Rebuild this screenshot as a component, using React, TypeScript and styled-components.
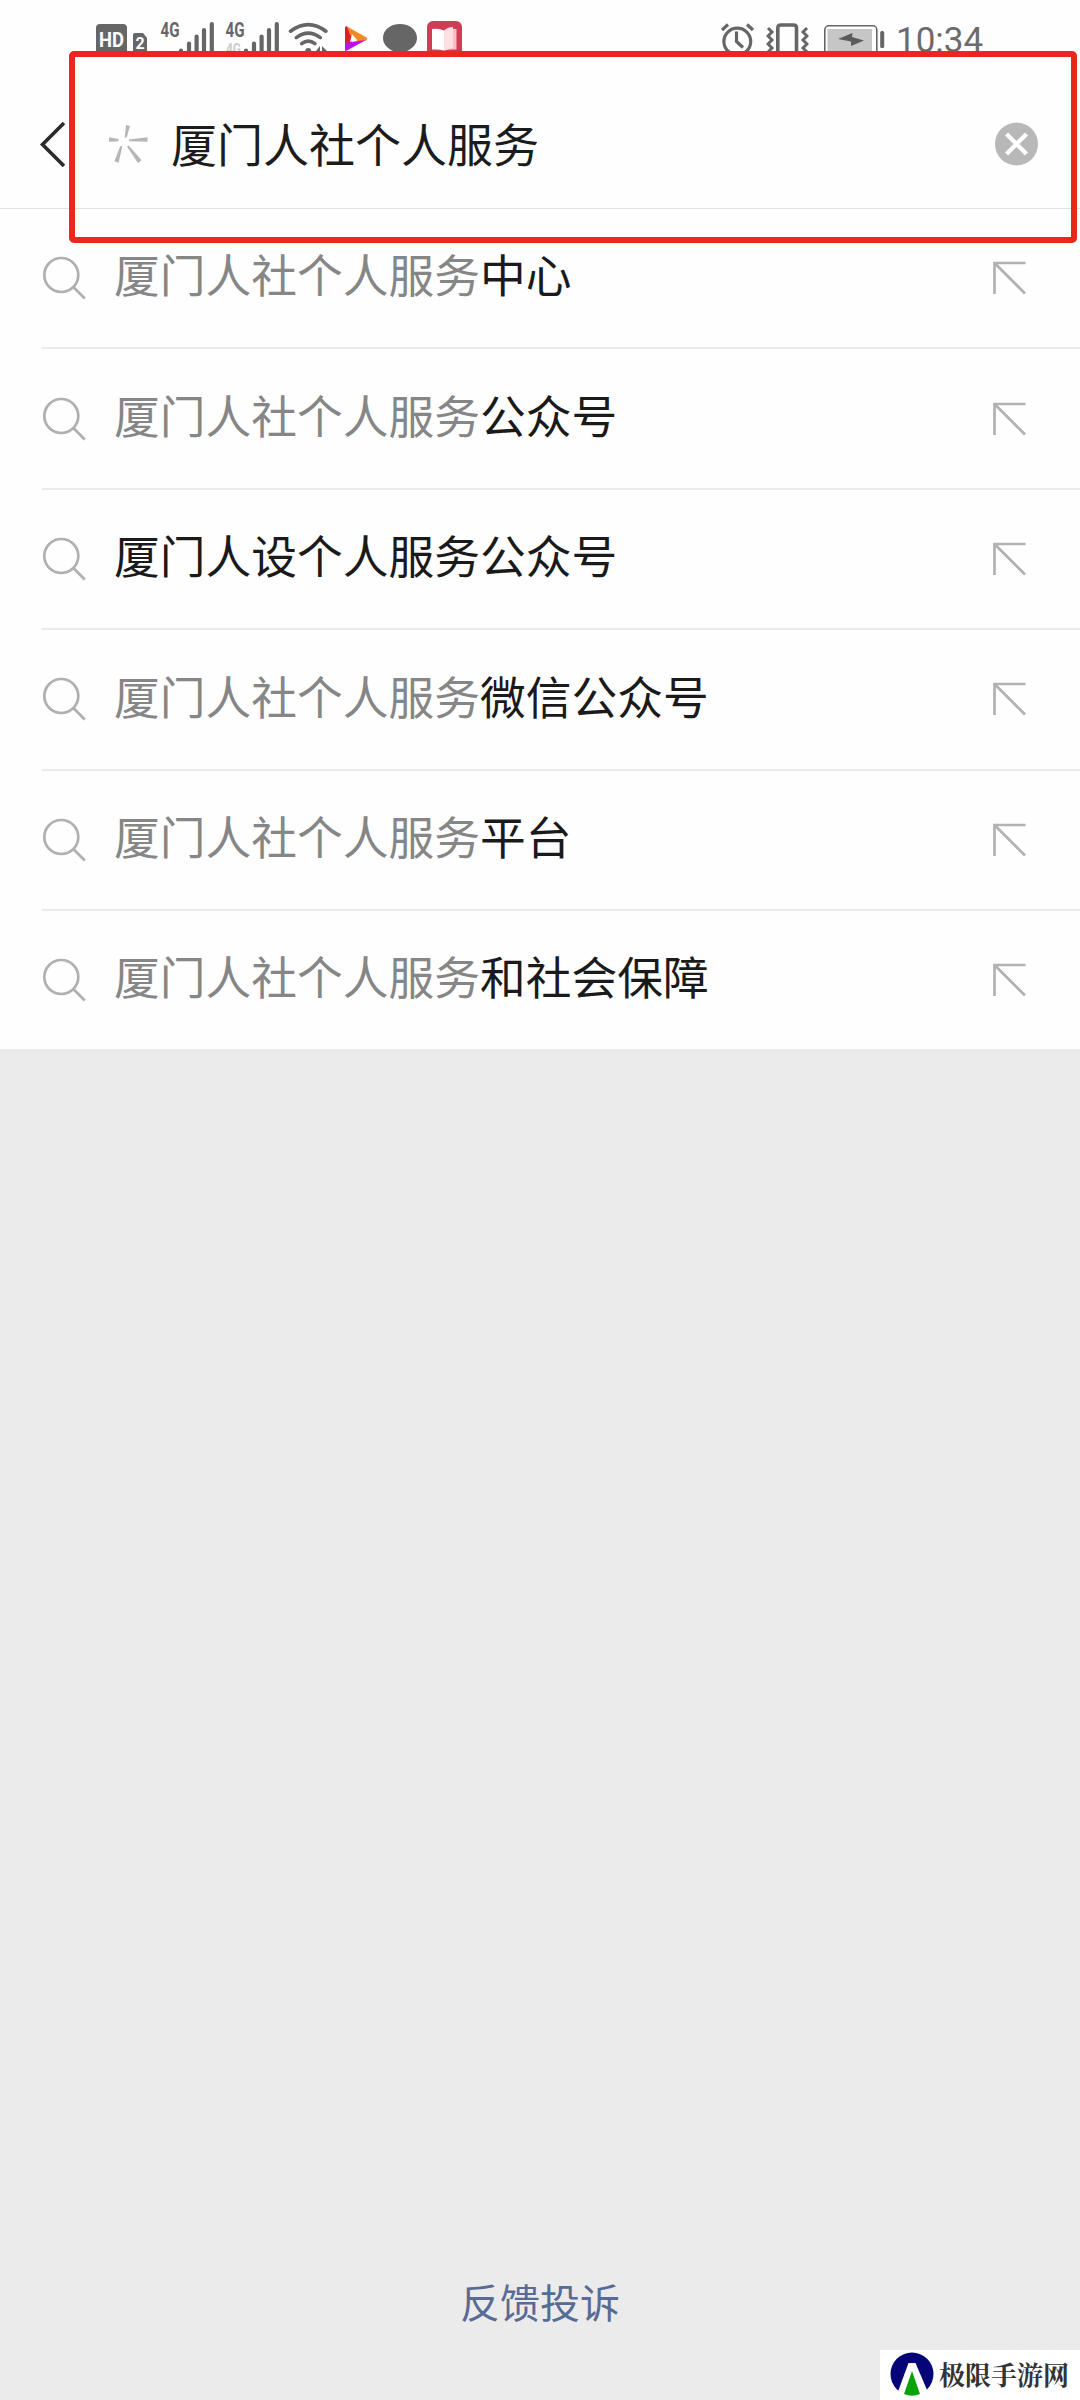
import React from "react";
import styled, { createGlobalStyle } from "styled-components";

const GlobalStyle = createGlobalStyle`
  * { box-sizing: border-box; }
  body {
    margin: 0;
    background: #ebebeb;
    font-family: "Noto Sans CJK SC", "Noto Sans", sans-serif;
  }
`;

const ink = "#666";

const Screen = styled.div`
  position: relative;
  display: flex;
  flex-direction: column;
  width: 1080px;
  height: 2400px;
  background: #ebebeb;
  overflow: hidden;
`;

const StatusBar = styled.div`
  display: flex;
  justify-content: space-between;
  height: 57px;
  padding: 0 96px 0 96px;
  background: #fefefe;
`;

const StatusGroup = styled.div`
  display: flex;
  align-items: flex-start;
  height: 57px;
`;

const Glyph = styled.svg<{ $gap?: number }>`
  display: block;
  flex: none;
  margin-right: ${(p) => p.$gap ?? 0}px;
`;

const Clock = styled.span`
  width: 88px;
  font: 400 35px/35px Roboto, sans-serif;
  color: #6b6b6b;
  padding-top: 23px;
  white-space: nowrap;
`;

const SearchBar = styled.header`
  display: flex;
  align-items: center;
  height: 152px;
  padding: 22px 42px 0 39px;
  background: #fefefe;
  border-bottom: 1px solid #e2e2e2;
`;

const Query = styled.div`
  flex: 1;
  margin: -4px 0 0 21px;
  font-size: 46px;
  line-height: 66px;
  color: #1c1c1c;
`;

const Suggestions = styled.ul`
  list-style: none;
  margin: 0;
  padding: 0 0 0 42px;
  height: 840px;
  background: #fefefe;
`;

const Suggestion = styled.li`
  display: flex;
  align-items: center;
  height: 140.4px;
  padding: 0 54px 0 0;
  border-bottom: 2px solid #ebebeb;

  &:first-child {
    padding-bottom: 1px;
  }

  &:last-child {
    height: 138px;
    border-bottom: 0;
  }
`;

const Label = styled.span`
  flex: 1;
  margin: -9px 0 0 28px;
  font-size: 45.75px;
  line-height: 66px;
  color: #1a1a1a;
  white-space: nowrap;
`;

const Typed = styled.span`
  color: #868686;
`;

const Feedback = styled.footer`
  margin-top: auto;
  padding-bottom: 69px;
  text-align: center;
  font-size: 40px;
  line-height: 60px;
  color: #576b95;
`;

const Highlight = styled.div`
  position: absolute;
  left: 69px;
  top: 51px;
  width: 1008px;
  height: 192px;
  border: 6px solid #ea261d;
  border-radius: 5px;
`;

const Watermark = styled.div`
  position: absolute;
  right: 0;
  bottom: 0;
  display: flex;
  align-items: center;
  width: 200px;
  height: 50px;
  padding: 0 0 2px 10px;
  gap: 5px;
  background: #fff;
  color: #333;
  font: 700 26px/48px "Noto Serif CJK SC", "Noto Sans CJK SC", serif;
  white-space: nowrap;
`;

function HdBadge() {
  return (
    <Glyph width="52" height="57" viewBox="96 0 52 57" $gap={12}>
      <path d="M96 57V28q0-4 4-4h23q4 0 4 4v29z" fill={ink} />
      <text x="111.5" y="46.5" textAnchor="middle" textLength="25" lengthAdjust="spacingAndGlyphs" fontFamily="Roboto" fontWeight="700" fontSize="20" fill="#fff">HD</text>
      <path d="M133 57V35q0-2 2-2h8l4 5v19z" fill={ink} />
      <text x="140" y="49" textAnchor="middle" fontFamily="Roboto" fontWeight="700" fontSize="16" fill="#fff">2</text>
    </Glyph>
  );
}

function Signal({ ghost, gap }: { ghost?: boolean; gap: number }) {
  return (
    <Glyph width="55" height="57" viewBox="160 0 55 57" $gap={gap}>
      <text x="160.5" y="36.5" textLength="19" lengthAdjust="spacingAndGlyphs" fontFamily="Roboto" fontWeight="700" fontSize="20" fill={ink}>4G</text>
      {ghost && (
        <text x="161" y="54" textLength="15" lengthAdjust="spacingAndGlyphs" fontFamily="Roboto" fontWeight="700" fontSize="14" fill="#ccc">4G</text>
      )}
      <path d="M181 50.5v6M189 43.5v13M196.6 36.5v20M204 30v26M211.8 24v32" stroke={ink} strokeWidth="4.2" strokeLinecap="round" />
    </Glyph>
  );
}

function Wifi() {
  return (
    <Glyph width="40" height="57" viewBox="288 0 40 57" $gap={17}>
      <g fill="none" stroke={ink} strokeWidth="3.6" strokeLinecap="round">
        <path d="M290.5 31.2q17.8-13.2 35.4 0" />
        <path d="M296.3 37.6q12-9 24 0" />
        <path d="M301.7 43.6q6.6-5 13.2 0" />
      </g>
      <circle cx="308.3" cy="51" r="3" fill={ink} />
      <path d="M316 51l4-5v5zM322 46l5 5h-5z" fill={ink} />
    </Glyph>
  );
}

function Player() {
  return (
    <Glyph width="23" height="57" viewBox="345 0 23 57" $gap={15}>
      <path d="M345 28q0-3 3-1l5 12-3 8-5 2z" fill="#d9202b" />
      <path d="M347 26.5l19.5 11q1.5 2-0.5 3l-8 1-8-7z" fill="#f08a22" />
      <path d="M345 51v-8l6-1 15-2-19 10.5z" fill="#bd12e2" />
      <path d="M352 34l5 6-7 2z" fill="#fff" />
    </Glyph>
  );
}

function Chat() {
  return (
    <Glyph width="34" height="57" viewBox="383 0 34 57" $gap={10}>
      <path d="M400 24c9.5 0 17 6 17 14 0 5-3 9-8 12-3 2-15 2-18 0-5-3-8-7-8-12 0-8 7.5-14 17-14z" fill={ink} />
    </Glyph>
  );
}

function Book() {
  return (
    <Glyph width="36" height="57" viewBox="427 0 36 57">
      <rect x="427" y="21" width="35" height="36" rx="6" fill="#d23d55" />
      <path d="M432 29q7-1 12 1.5v20q-5-1.5-12-1z" fill="#fff" />
      <path d="M456.5 29q-7-1-12.5 1.5v20q5-1.5 12.5-1z" fill="#fbc0c6" />
      <path d="M453 27q-6 0-9 4v19.5l9-3z" fill="#fde0e2" />
    </Glyph>
  );
}

function Alarm() {
  return (
    <Glyph width="34" height="57" viewBox="721 0 34 57" $gap={11}>
      <g fill="none" stroke={ink} strokeWidth="3.2">
        <circle cx="737.3" cy="41.5" r="13.4" />
        <path d="M722 30l6-5.5M747 24.5l6 5.5" />
        <path d="M736.5 31.5v10l6.5 6" />
      </g>
    </Glyph>
  );
}

function Vibrate() {
  return (
    <Glyph width="43" height="57" viewBox="766 0 43 57" $gap={15}>
      <g fill="none" stroke={ink}>
        <path d="M777.8 57V28q0-3 3-3h12.7q3 0 3 3v29" strokeWidth="3.6" />
        <path d="M768 28l4 4-4 4 4 4-4 4 4 4-4 4M807 28l-4 4 4 4-4 4 4 4-4 4 4 4" strokeWidth="3" />
      </g>
    </Glyph>
  );
}

function Battery() {
  return (
    <Glyph width="61" height="57" viewBox="824 0 61 57" $gap={11}>
      <rect x="824.8" y="25.8" width="52" height="40" rx="4" fill="#fff" stroke={ink} strokeWidth="1.6" />
      <path d="M827.5 29H872v28h-44.5z" fill="#c6c6c6" />
      <path d="M838 39l14.5-6-0.5 4 12 3.5-13 5.5v-4.5z" fill="#5b5b5b" />
      <rect x="880.2" y="31" width="4" height="17" rx="1.5" fill={ink} />
    </Glyph>
  );
}

function BackIcon() {
  return (
    <Glyph width="28" height="50" viewBox="39 118 28 50" $gap={41}>
      <path d="M64 122L42.5 143.5 64 165" fill="none" stroke="#2b2b2b" strokeWidth="3.6" />
    </Glyph>
  );
}

function Spinner() {
  return (
    <Glyph width="42" height="42" viewBox="108 122 42 42">
      <g fill="#b6b6b6">
        <path d="M126 124l4 1-3.3 11.5h-2z" />
        <path d="M147.5 136.3v4.5l-18.5-0.5v-1.8z" />
        <path d="M109 136.3v4.5l9.5-0.5v-2.2z" />
        <path d="M120.3 145l2 0.6-3.7 16.2-4.2-1.6z" />
        <path d="M127 145.6l1.7-1.2 12.9 14.8-3.7 2.7z" />
      </g>
    </Glyph>
  );
}

function ClearIcon() {
  return (
    <Glyph width="44" height="44" viewBox="0 0 44 44">
      <circle cx="22.5" cy="22" r="21.5" fill="#b8b8b8" />
      <path d="M12.5 12l20 20M32.5 12L12.5 32" stroke="#fff" strokeWidth="4.2" />
    </Glyph>
  );
}

function SearchIcon() {
  return (
    <Glyph width="44" height="44" viewBox="42 256 44 44">
      <g fill="none" stroke="#b0b0b0" strokeWidth="2.7">
        <circle cx="61.3" cy="275" r="17" />
        <path d="M73.3 287l11.5 11.5" />
      </g>
    </Glyph>
  );
}

function FillArrow() {
  return (
    <Glyph width="34" height="34" viewBox="0 0 34 34">
      <path d="M33.5 2H2.5v31M2.5 2l30.5 30.5" fill="none" stroke="#b2b2b2" strokeWidth="2.7" />
    </Glyph>
  );
}

function Logo() {
  return (
    <Glyph width="44" height="46" viewBox="0 0 44 46">
      <circle cx="22" cy="23" r="21.5" fill="#050578" />
      <path d="M18.5 12h7L40 46H6z" fill="#fff" />
      <path d="M22 20l8 23q-8 3.5-16 0z" fill="#08a308" />
    </Glyph>
  );
}

const suggestions = [
  { typed: "厦门人社个人服务", rest: "中心" },
  { typed: "厦门人社个人服务", rest: "公众号" },
  { typed: "", rest: "厦门人设个人服务公众号" },
  { typed: "厦门人社个人服务", rest: "微信公众号" },
  { typed: "厦门人社个人服务", rest: "平台" },
  { typed: "厦门人社个人服务", rest: "和社会保障" },
];

export default function App() {
  return (
    <Screen>
      <GlobalStyle />
      <StatusBar>
        <StatusGroup>
          <HdBadge />
          <Signal gap={10} />
          <Signal ghost gap={8} />
          <Wifi />
          <Player />
          <Chat />
          <Book />
        </StatusGroup>
        <StatusGroup>
          <Alarm />
          <Vibrate />
          <Battery />
          <Clock>10:34</Clock>
        </StatusGroup>
      </StatusBar>
      <SearchBar>
        <BackIcon />
        <Spinner />
        <Query>厦门人社个人服务</Query>
        <ClearIcon />
      </SearchBar>
      <Suggestions>
        {suggestions.map((s, i) => (
          <Suggestion key={i}>
            <SearchIcon />
            <Label>
              {s.typed && <Typed>{s.typed}</Typed>}
              {s.rest}
            </Label>
            <FillArrow />
          </Suggestion>
        ))}
      </Suggestions>
      <Feedback>反馈投诉</Feedback>
      <Highlight />
      <Watermark>
        <Logo />
        极限手游网
      </Watermark>
    </Screen>
  );
}
